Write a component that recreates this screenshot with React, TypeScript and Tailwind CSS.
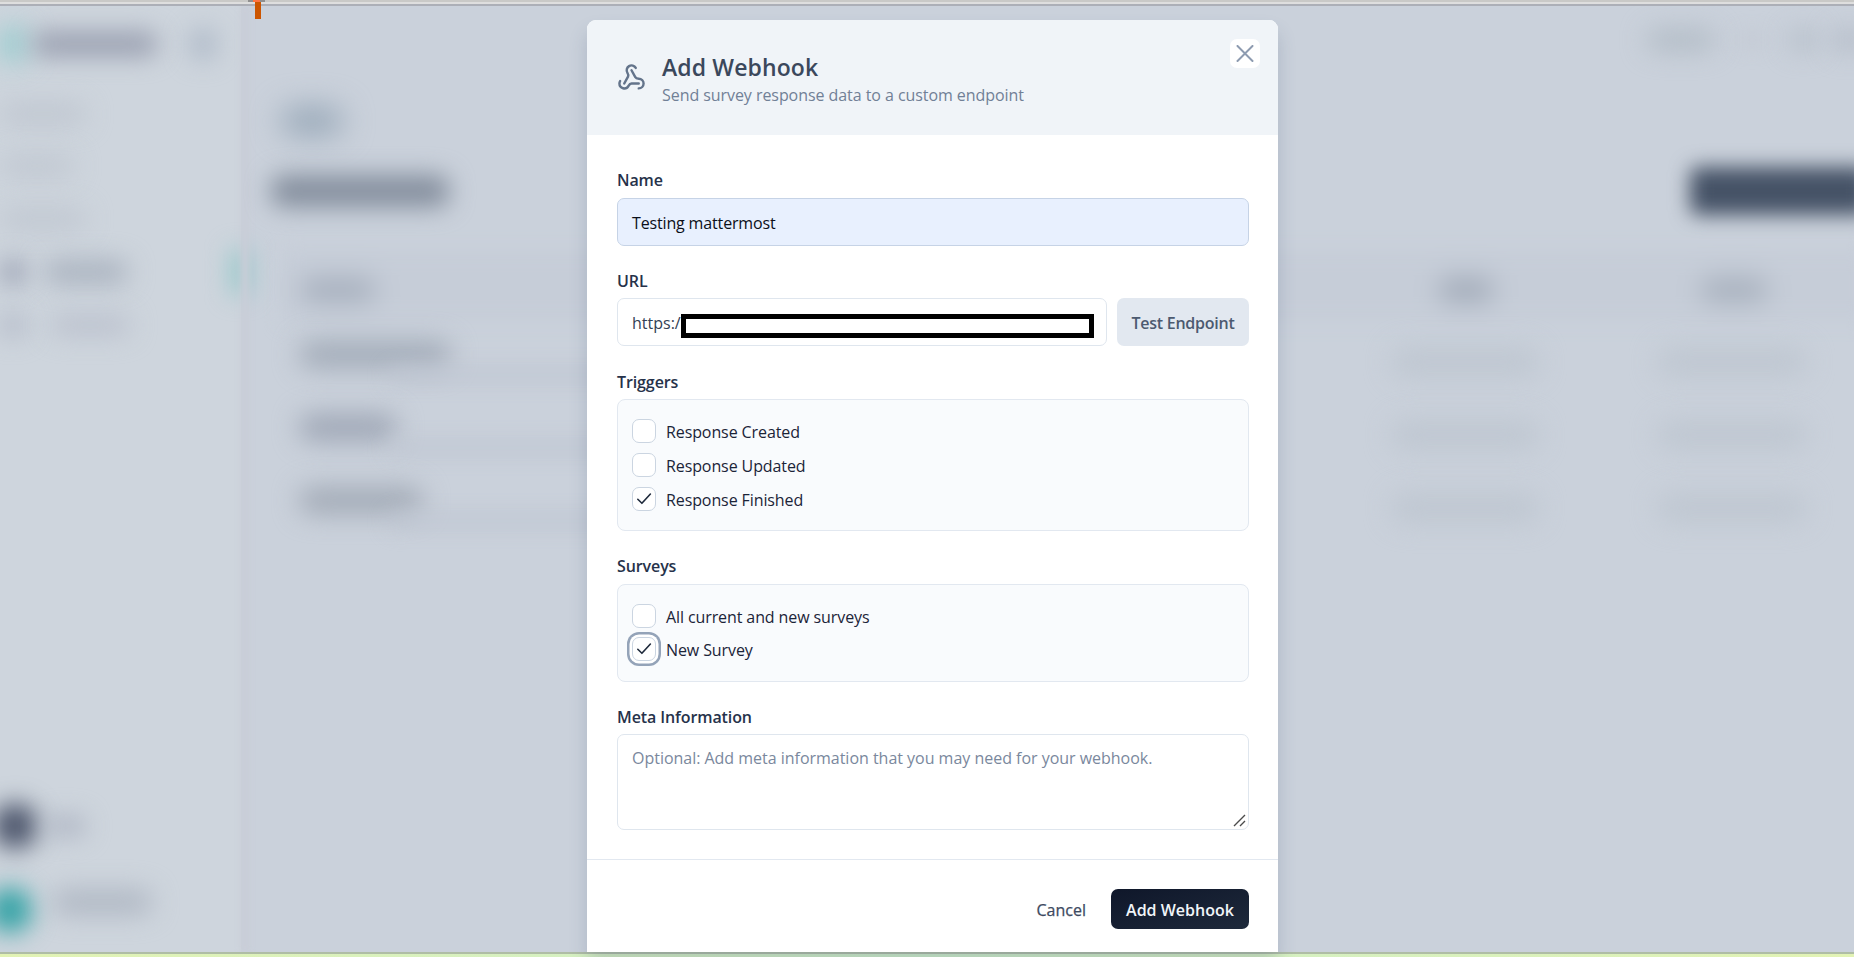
import type { ReactNode } from "react";
import { Webhook } from "lucide-react";

function Smudge({ className }: { className: string }) {
  return <div className={`shrink-0 rounded-full ${className}`} />;
}

function NavRow({ className, children }: { className: string; children: ReactNode }) {
  return <div className={`flex items-center ${className}`}>{children}</div>;
}

function Sidebar() {
  return (
    <aside className="flex h-full w-[241px] shrink-0 flex-col bg-[#ced5dd]">
      <NavRow className="h-[76px]">
        <Smudge className="h-[36px] w-[26px] bg-[#8fcccd] blur-[14px]" />
        <Smudge className="ml-[6px] h-[24px] w-[126px] bg-[#989eaf] blur-[12px]" />
        <Smudge className="ml-[32px] h-[30px] w-[26px] bg-[#a9b5c4] blur-[13px]" />
      </NavRow>
      <NavRow className="mt-[6px] h-[52px]">
        <Smudge className="h-[20px] w-[86px] bg-[#bec5cf] blur-[13px]" />
      </NavRow>
      <NavRow className="h-[52px]">
        <Smudge className="h-[20px] w-[74px] bg-[#bfc6d0] blur-[13px]" />
      </NavRow>
      <NavRow className="h-[53px]">
        <Smudge className="h-[20px] w-[86px] bg-[#bfc6d0] blur-[13px]" />
      </NavRow>
      <NavRow className="h-[54px]">
        <Smudge className="h-[26px] w-[26px] bg-[#989fb1] blur-[12px]" />
        <Smudge className="ml-[18px] h-[22px] w-[84px] bg-[#a6afbc] blur-[13px]" />
        <div className="-mr-[8px] ml-auto h-[44px] w-[18px] shrink-0 bg-[#93c8c9] blur-[12px]" />
      </NavRow>
      <NavRow className="h-[52px]">
        <Smudge className="h-[22px] w-[26px] bg-[#aeb5c4] blur-[13px]" />
        <Smudge className="ml-[24px] h-[18px] w-[80px] bg-[#b8becb] blur-[13px]" />
      </NavRow>
      <NavRow className="mt-auto h-[84px]">
        <Smudge className="-ml-[8px] h-[46px] w-[46px] bg-[#4d566c] blur-[12px]" />
        <Smudge className="ml-2 h-[20px] w-[40px] bg-[#adb4c2] blur-[12px]" />
      </NavRow>
      <NavRow className="h-[84px]">
        <Smudge className="-ml-[12px] h-[46px] w-[44px] bg-[#35a3a6] blur-[12px]" />
        <Smudge className="-mt-4 ml-5 h-[24px] w-[100px] bg-[#aeb6c2] blur-[13px]" />
      </NavRow>
    </aside>
  );
}

function TableRow({ name }: { name: ReactNode }) {
  return (
    <div className="flex h-[73px] items-center">
      <div className="w-[1100px] pl-[54px]">
        {name}
        <Smudge className="ml-[90px] h-[14px] w-[230px] bg-[#bfc6d2] blur-[10px]" />
      </div>
      <Smudge className="ml-[46px] h-[30px] w-[148px] bg-[#bfc7d1] blur-[13px]" />
      <Smudge className="ml-[118px] h-[30px] w-[150px] bg-[#bfc7d1] blur-[13px]" />
    </div>
  );
}

function Backdrop() {
  return (
    <div className="flex h-full w-full overflow-hidden bg-[#cad1db]">
      <Sidebar />
      <div className="w-[8px] shrink-0 bg-[#c9cdd7] blur-[3px]" />
      <main className="flex min-w-0 flex-1 flex-col">
        <div className="flex h-[68px] items-center">
          <Smudge className="ml-[1398px] h-[20px] w-[68px] bg-[#b0bac4] blur-[13px]" />
          <Smudge className="ml-[24px] h-[12px] w-[26px] bg-[#c1c7d1] blur-[10px]" />
          <Smudge className="ml-[24px] h-[20px] w-[28px] bg-[#b2bbc6] blur-[13px]" />
          <Smudge className="ml-[14px] h-[20px] w-[36px] bg-[#b2bac6] blur-[13px]" />
        </div>
        <Smudge className="mt-[33px] ml-[32px] h-[28px] w-[62px] bg-[#97a7b7] blur-[15px]" />
        <div className="mt-[25px] flex h-[62px] items-center justify-between">
          <div className="ml-[22px] h-[32px] w-[178px] rounded-xl bg-[#848e9d] blur-[12px]" />
          <div className="-mr-4 h-[48px] w-[180px] rounded-lg bg-[#455266] blur-[10px]" />
        </div>
        <div className="mt-[29px] -mr-4 ml-[34px] flex h-[70px] shrink-0 items-center bg-[#c6cdd8] blur-[10px]">
          <Smudge className="mt-2 ml-[18px] h-[22px] w-[74px] bg-[#a3acba] blur-[9px]" />
          <Smudge className="mt-2 ml-[1064px] h-[22px] w-[54px] bg-[#9ea7b5] blur-[9px]" />
          <Smudge className="mt-2 ml-[208px] h-[22px] w-[66px] bg-[#a4adba] blur-[9px]" />
        </div>
        <div className="mt-[4px] -ml-[4px] flex flex-col">
          <TableRow name={<Smudge className="h-[27px] w-[152px] bg-[#a2abb8] blur-[13px]" />} />
          <TableRow name={<Smudge className="h-[27px] w-[98px] bg-[#9ea6b5] blur-[13px]" />} />
          <TableRow name={<Smudge className="h-[27px] w-[124px] bg-[#a2aab6] blur-[13px]" />} />
        </div>
      </main>
    </div>
  );
}

function Label({ className, children }: { className: string; children: ReactNode }) {
  return (
    <label className={`block h-[24px] shrink-0 text-[16px] leading-[24px] font-semibold tracking-[-0.1px] text-[#26324a] ${className}`}>
      {children}
    </label>
  );
}

function Check({
  checked,
  focused,
  children,
}: {
  checked?: boolean;
  focused?: boolean;
  children: ReactNode;
}) {
  return (
    <div className="flex h-[24px] items-center">
      <span
        className={`flex h-[24px] w-[24px] shrink-0 items-center justify-center rounded-[7px] border border-[#cbd5e1] bg-white ${
          focused ? "ring-[2.5px] ring-[#94a3b8] ring-offset-[2.5px] ring-offset-white" : ""
        }`}
      >
        {checked && (
          <svg className="h-[18px] w-[18px]" viewBox="0 0 18 18" fill="none" stroke="#1e293b" strokeWidth="1.6" strokeLinecap="round" strokeLinejoin="round">
            <path d="M2.8 9.3 L6.9 13.3 L15.4 4" />
          </svg>
        )}
      </span>
      <span className="mt-px ml-[10px] text-[16px] leading-[24px] tracking-[-0.1px] text-[#1b2438]">{children}</span>
    </div>
  );
}

function Modal() {
  return (
    <div className="flex h-[932px] w-[691px] flex-col overflow-hidden rounded-t-[9px] bg-white shadow-[0_12px_18px_rgba(70,85,120,0.22)]">
      <header className="flex h-[115px] shrink-0 bg-[#f0f4f8] pr-[18px] pl-[30px]">
        <Webhook className="mt-[43px] h-[29px] w-[29px] text-[#64748b]" strokeWidth={2} />
        <div className="ml-[16px] pt-[31px]">
          <h2 className="text-[23px] leading-[32px] font-semibold tracking-[0.12px] whitespace-nowrap text-[#3b485c]">Add Webhook</h2>
          <p className="text-[16px] leading-[24px] tracking-[-0.06px] whitespace-nowrap text-[#718096]">Send survey response data to a custom endpoint</p>
        </div>
        <button className="mt-[19px] ml-auto flex h-[29px] w-[30px] items-center justify-center rounded-[7px] bg-white">
          <svg className="h-[18px] w-[18px]" viewBox="0 0 18 18" stroke="#8d9bb0" strokeWidth="2" strokeLinecap="round">
            <path d="M1.5 1 L16.5 16 M16.5 1 L1.5 16" />
          </svg>
        </button>
      </header>

      <div className="flex h-[725px] shrink-0 flex-col border-b border-[#e2e8f0] pt-[33px] pr-[29px] pl-[30px]">
        <Label className="">Name</Label>
        <div className="mt-[6px] flex h-[48px] shrink-0 items-center rounded-[7px] border border-[#c6d3e6] bg-[#e8f0fe] px-[14px] pt-px text-[16px] tracking-[-0.15px] text-[#0b0f19]">
          <span>Testing mattermost</span>
        </div>

        <Label className="mt-[23px]">URL</Label>
        <div className="mt-[5px] flex h-[48px] shrink-0 gap-[10px]">
          <div className="flex flex-1 items-center rounded-[7px] border border-[#dfe6ee] pl-[14px] text-[16px] text-[#334155]">
            <span className="w-[49px] shrink-0 pt-px whitespace-nowrap">https:/</span>
            <div className="mt-[7px] h-[24px] w-[413px] shrink-0 border-[5px] border-black bg-white" />
          </div>
          <button className="h-[48px] w-[132px] rounded-[7px] bg-[#e2e8f0] pt-px text-[16px] font-semibold tracking-[-0.25px] whitespace-nowrap text-[#4c5a70]">
            Test Endpoint
          </button>
        </div>

        <Label className="mt-[24px]">Triggers</Label>
        <div className="mt-[5px] flex h-[132px] shrink-0 flex-col gap-[10px] rounded-[8px] border border-[#e2e8f0] bg-[#f9fbfd] px-[14px] pt-[19px]">
          <Check>Response Created</Check>
          <Check>Response Updated</Check>
          <Check checked>Response Finished</Check>
        </div>

        <Label className="mt-[23px]">Surveys</Label>
        <div className="mt-[6px] flex h-[98px] shrink-0 flex-col gap-[9px] rounded-[8px] border border-[#e2e8f0] bg-[#f9fbfd] px-[14px] pt-[19px]">
          <Check>All current and new surveys</Check>
          <Check checked focused>New Survey</Check>
        </div>

        <Label className="mt-[23px]">Meta Information</Label>
        <div className="mt-[5px] flex h-[96px] shrink-0 justify-between rounded-[7px] border border-[#dfe6ee] bg-white pt-[11px] pr-[2px] pb-[2px] pl-[14px]">
          <span className="text-[16px] leading-[24px] tracking-[-0.02px] text-[#7a889d]">
            Optional: Add meta information that you may need for your webhook.
          </span>
          <svg className="h-[13px] w-[13px] self-end" viewBox="0 0 13 13" stroke="#4b4b4b" strokeWidth="1.4">
            <path d="M1 12 L12 1 M7 12 L12 7" />
          </svg>
        </div>
      </div>

      <footer className="flex items-center justify-end gap-[25px] px-[29px] pt-[29px]">
        <button className="pt-px text-[16px] font-medium text-[#3d4a61] [-webkit-text-stroke:0.25px_#3d4a61]">Cancel</button>
        <button className="h-[40px] w-[138px] rounded-[7px] bg-linear-to-br from-[#0f172a] to-[#1e293b] pt-px text-[16px] font-semibold whitespace-nowrap text-[#f1f5f9]">
          Add Webhook
        </button>
      </footer>
    </div>
  );
}

export default function App() {
  return (
    <div className="flex h-[957px] w-[1854px] flex-col overflow-hidden font-['Open_Sans','Noto_Sans',sans-serif]">
      <div className="h-[2px] shrink-0 bg-[#c9c9c7]" />
      <div className="h-[2px] shrink-0 bg-[#dedede]" />
      <div className="h-[2px] shrink-0 bg-[#acafb7]" />
      <div className="relative h-[946px] shrink-0">
        <Backdrop />
        <div className="absolute top-[14px] left-[587px]">
          <Modal />
        </div>
        <div className="absolute -top-[6px] left-[248px] flex w-[17px] flex-col items-center">
          <div className="flex h-[2px] w-full justify-center bg-[#8f8f8f]">
            <div className="h-[2px] w-[7px] bg-[#ff7340]" />
          </div>
          <div className="ml-[3px] h-[17px] w-[6px] bg-[#cc5500]" />
        </div>
      </div>
      <div className="h-[2px] shrink-0 bg-[#afbda5]" />
      <div className="h-[3px] shrink-0 bg-linear-to-r from-[#e2f3b4] via-[#cdeec8] to-[#e2f3b4]" />
    </div>
  );
}
